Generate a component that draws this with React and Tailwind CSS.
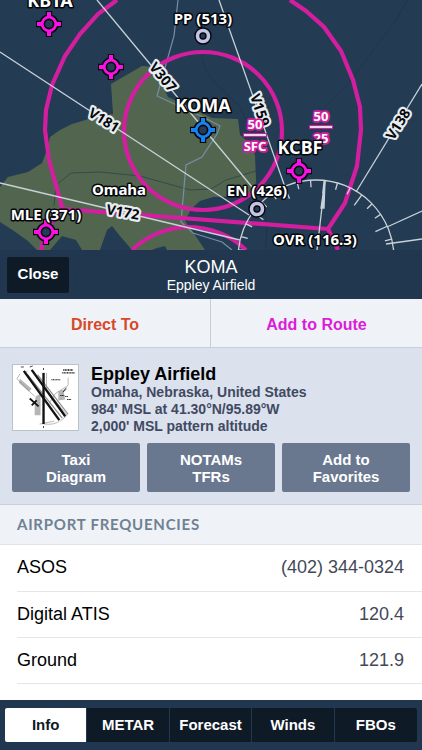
import React, { useState } from 'react';

const TABS = ['Info', 'METAR', 'Forecast', 'Winds', 'FBOs'];

const FREQUENCIES = [
  { name: 'ASOS', value: '(402) 344-0324' },
  { name: 'Digital ATIS', value: '120.4' },
  { name: 'Ground', value: '121.9' },
];

const ROSE = { x: 316, y: 258, r: 78, variation: 6 };

const AirportMarker = ({ x, y, color }) => (
  <g transform={`translate(${x} ${y})`}>
    <path d="M0-13V13M-13 0H13" stroke="#05070c" strokeWidth="6.4" />
    <circle r="9" fill={color} stroke="#05070c" strokeWidth="1.6" />
    <path d="M0-12V-6M0 6V12M-12 0H-6M6 0H12" stroke={color} strokeWidth="4" />
    <circle r="4.6" fill="#233b53" stroke="#05070c" strokeWidth="1.6" />
  </g>
);

const Beacon = ({ x, y }) => (
  <g transform={`translate(${x} ${y})`}>
    <circle r="8" fill="#c3c4e6" stroke="#05070c" strokeWidth="1.4" />
    <circle r="3" fill="#233b53" stroke="#05070c" strokeWidth="1.4" />
  </g>
);

const MapLabel = ({ x, y, size = 15, children }) => (
  <text
    x={x}
    y={y}
    fontSize={size}
    textAnchor="middle"
    fill="#fff"
    stroke="#05070c"
    strokeWidth="3"
    strokeLinejoin="round"
    paintOrder="stroke"
  >
    {children}
  </text>
);

const AirwayLabel = ({ x, y, angle, children }) => (
  <text
    transform={`translate(${x} ${y}) rotate(${angle})`}
    y="5"
    fontSize="14"
    textAnchor="middle"
    fill="#05070c"
    stroke="#e8edf0"
    strokeWidth="4.4"
    strokeLinejoin="round"
    paintOrder="stroke"
  >
    {children}
  </text>
);

const AirspaceLabel = ({ x, y, top, bottom }) => (
  <g
    transform={`translate(${x} ${y})`}
    fontSize="13"
    textAnchor="middle"
    fill="#fff"
    stroke="#d31ea0"
    strokeWidth="3.6"
    strokeLinejoin="round"
    paintOrder="stroke"
  >
    <text y="-6">{top}</text>
    <path d="M-12 0H12" strokeWidth="4" />
    <path d="M-11 0H11" stroke="#fff" strokeWidth="1.6" />
    <text y="16">{bottom}</text>
  </g>
);

const CompassRose = () => (
  <g transform={`translate(${ROSE.x} ${ROSE.y})`} stroke="#c9d2d8" strokeWidth="1.3" fill="none">
    <circle r={ROSE.r} />
    {Array.from({ length: 36 }, (_, i) => (
      <path
        key={i}
        d={`M0 ${-ROSE.r}V${i % 3 === 0 ? -ROSE.r + 13 : -ROSE.r + 7}`}
        transform={`rotate(${i * 10 + ROSE.variation})`}
      />
    ))}
    <path d="M9-77L1-8" />
    <path d="M9-77L8-50L5-50Z" fill="#c9d2d8" />
  </g>
);

const AirspaceMap = () => (
  <svg
    viewBox="0 0 422 250"
    preserveAspectRatio="xMidYMid slice"
    className="block w-full h-[250px] bg-[#233b53] font-['Noto_Sans',sans-serif] font-bold"
    role="img"
    aria-label="Airspace map around KOMA"
  >
    {/* Land */}
    <path
      fill="#52664f"
      d="M0 187L8 177L28 172L42 163L47 150L50 137L60 130L72 124L92 118L113 114L111 84L142 66L155 67L161 82L168 97L188 106L212 118L238 119L240 135L247 141L255 155L256 180L255 196L213 197L200 201L191 209L185 221L193 232L205 250H167L165 246L157 248L152 250H132L120 236L112 226L107 230L100 250H82L76 240L62 236L50 250H37L28 241L14 231L0 222Z"
    />
    <g fill="none" stroke="#1d3246" strokeOpacity=".55" strokeWidth="1">
      <path d="M54 206L56 185L71 173L100 172L140 176L190 190L211 189L226 180L256 171" />
      <path d="M202 53C203 78 222 88 240 107L254 136" />
      <path d="M407 0L398 17L349 83L310 123" />
      <path d="M263 205L267 225L266 250" />
    </g>
    <path
      d="M178 0L174 36L157 96L205 118L220 126L217 134L202 157L186 165L181 222L193 233L222 242L232 250"
      fill="none"
      stroke="#768fa8"
      strokeWidth="1.2"
    />

    {/* Controlled airspace */}
    <g fill="none" stroke="#d31ea0" strokeWidth="4.2">
      <circle cx="203" cy="131" r="79" />
      <path d="M117 0L98 14L80 34L65 56L52 85L46 110L45 130L49 160L62 207L45 234L41 250" />
      <path d="M290 0L306 11L324 27L341 51L353 80L360 107L361 130L357 166L345 203L328 229L338 250" />
      <path d="M62 209L328 229" />
      <path d="M132 250Q156 228 187 227Q222 227 246 250" />
    </g>

    {/* Airways */}
    <g stroke="#c9d2d8" strokeWidth="1.3">
      <path d="M0 52L249 215" />
      <path d="M97 0L252 187" />
      <path d="M219 0L285 187" />
      <path d="M0 183L240 240" />
      <path d="M422 84L356 192" />
      <path d="M387 227L422 211M386 244L422 239" />
    </g>
    <CompassRose />

    <AirwayLabel x={163} y={77} angle={50}>V307</AirwayLabel>
    <AirwayLabel x={104} y={120} angle={32}>V181</AirwayLabel>
    <AirwayLabel x={260} y={110} angle={71}>V159</AirwayLabel>
    <AirwayLabel x={398} y={124} angle={-58}>V138</AirwayLabel>
    <AirwayLabel x={123} y={212} angle={10}>V172</AirwayLabel>

    <AirspaceLabel x={255} y={135} top="50" bottom="SFC" />
    <AirspaceLabel x={321} y={127} top="50" bottom="25" />

    <AirportMarker x={49} y={24} color="#fb11e6" />
    <AirportMarker x={111} y={67} color="#fb11e6" />
    <AirportMarker x={46} y={232} color="#fb11e6" />
    <AirportMarker x={299} y={171} color="#fb11e6" />
    <AirportMarker x={203} y={130} color="#1583f5" />
    <Beacon x={203} y={36} />
    <Beacon x={257} y={209} />

    <MapLabel x={50} y={7} size={18}>KBTA</MapLabel>
    <MapLabel x={203} y={24}>PP (513)</MapLabel>
    <MapLabel x={203} y={112} size={18}>KOMA</MapLabel>
    <MapLabel x={300} y={154} size={18}>KCBF</MapLabel>
    <MapLabel x={257} y={196}>EN (426)</MapLabel>
    <MapLabel x={119} y={195}>Omaha</MapLabel>
    <MapLabel x={46} y={220}>MLE (371)</MapLabel>
    <MapLabel x={315} y={245}>OVR (116.3)</MapLabel>
  </svg>
);

const DiagramThumbnail = () => (
  <svg
    viewBox="0 0 66 66"
    className="size-[67px] shrink-0 border border-[#b9c1cd] bg-white"
    role="img"
    aria-label="Airport diagram"
  >
    <g fill="#b5b5b5">
      <path d="M23 32L28 29V51H22V39Z" />
      <path d="M7 14L19 24L16 27L6 18Z" />
      <path d="M46 27L51 25L53 35L46 36Z" />
    </g>
    <g fill="none" stroke="#888" strokeWidth=".6">
      <path d="M7 9L4 14L22 32M15 6L11 9M34 8V25L55 51L48 57M27 60L42 57M32 60Q42 61 47 57M36 40L43 29L54 22M56 13V20L50 29" />
      <path d="M15 10L50 54M25 10L56 50" strokeWidth="1.2" />
    </g>
    <g stroke="#111" fill="none">
      <path d="M11 6L47 56" strokeWidth="2.4" />
      <path d="M19 5L53 52" strokeWidth="2.4" />
      <path d="M31 8V60" strokeWidth="2.4" />
      <path d="M17 34L26 42M19 41L24 36" strokeWidth="1.8" />
      <path d="M51 5H61M50 8H63" strokeWidth="1.5" strokeDasharray="1.1 .5" />
      <path d="M39 15H48M48 31H52M51 27L54 24M53 32H56M55 35H59" strokeWidth="1.2" strokeDasharray="1.1 .5" />
      <path d="M31 3V5M31 62V64M8 2H11M17 2L20 1" strokeWidth=".8" />
    </g>
  </svg>
);

const App = () => {
  const [activeTab, setActiveTab] = useState('Info');

  return (
    <div className="flex min-h-screen flex-col bg-white font-['Liberation_Sans',Arial,sans-serif]">
      <AirspaceMap />

      {/* Title bar */}
      <header className="grid h-[49px] grid-cols-[1fr_auto_1fr] items-center bg-[#20374f] px-[7px] text-white">
        <button type="button" className="h-9 w-[62px] rounded-xs bg-[#0f1a27] text-[15px] font-bold">
          Close
        </button>
        <div className="text-center">
          <h1 className="text-[18px] leading-5">KOMA</h1>
          <p className="text-[14px] leading-4">Eppley Airfield</p>
        </div>
      </header>

      {/* Route actions */}
      <div className="grid h-[49px] grid-cols-2 divide-x divide-[#c8ced8] border-b border-[#c8ced8] bg-[#eff3f7] text-[16px] font-bold">
        <button type="button" className="pt-1 text-[#d8482a]">Direct To</button>
        <button type="button" className="pt-1 text-[#dc1bdc]">Add to Route</button>
      </div>

      {/* Airport summary */}
      <section className="border-b border-[#c8d0dc] bg-[#dbe1ed] px-3 pt-4 pb-3">
        <div className="flex gap-3">
          <DiagramThumbnail />
          <div className="text-[14px] leading-[17px] font-bold text-[#414a62]">
            <h2 className="text-[18px] leading-5 text-black">Eppley Airfield</h2>
            <p>Omaha, Nebraska, United States</p>
            <p>984' MSL at 41.30°N/95.89°W</p>
            <p>2,000' MSL pattern altitude</p>
          </div>
        </div>
        <div className="mt-2 grid grid-cols-3 gap-[7px] text-[15px] leading-[17px] font-bold text-white">
          <button type="button" className="h-[49px] rounded-xs bg-[#69788f]">Taxi<br />Diagram</button>
          <button type="button" className="h-[49px] rounded-xs bg-[#69788f]">NOTAMs<br />TFRs</button>
          <button type="button" className="h-[49px] rounded-xs bg-[#69788f]">Add to<br />Favorites</button>
        </div>
      </section>

      {/* Frequencies */}
      <section className="flex-1">
        <h3 className="flex h-10 items-center border-b border-[#dfe4e8] bg-[#eff3f7] px-[17px] font-[Lato,sans-serif] text-[15px] font-bold tracking-wider text-[#6f8192]">
          AIRPORT FREQUENCIES
        </h3>
        <div className="pl-[17px]">
          <table className="w-full text-[18px]">
            <tbody>
              {FREQUENCIES.map(({ name, value }) => (
                <tr key={name} className="h-[46px] border-b border-[#e3e6ea]">
                  <th scope="row" className="text-left font-normal text-black">{name}</th>
                  <td className="pr-[18px] text-right text-[#434957]">{value}</td>
                </tr>
              ))}
            </tbody>
          </table>
        </div>
      </section>

      {/* Tabs */}
      <nav className="bg-[#20374f] px-[5px] py-2">
        <div className="grid h-[34px] grid-cols-5 divide-x divide-[#20374f] overflow-hidden rounded-xs text-[15px] font-bold">
          {TABS.map((tab) => (
            <button
              key={tab}
              type="button"
              aria-pressed={tab === activeTab}
              onClick={() => setActiveTab(tab)}
              className={tab === activeTab ? 'bg-white text-[#0f1a27]' : 'bg-[#0f1a27] text-white'}
            >
              {tab}
            </button>
          ))}
        </div>
      </nav>
    </div>
  );
};

export default App;
